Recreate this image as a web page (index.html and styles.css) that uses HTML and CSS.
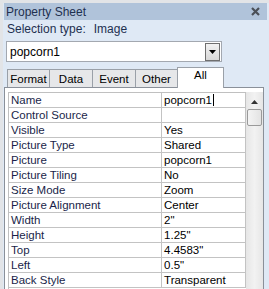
FILE: index.html
```html
<!DOCTYPE html>
<html>
<head>
<meta charset="utf-8">
<link rel="stylesheet" href="styles.css">
</head>
<body>
<div class="sheet">
  <div class="titlebar">
    <span class="title">Property Sheet</span>
    <svg class="close" width="9" height="9" viewBox="0 0 9 9"><path d="M1 1L8 8M8 1L1 8" stroke="#4a4f57" stroke-width="2.2"/></svg>
  </div>
  <div class="seltype"><span>Selection type:</span><span class="seltype-val">Image</span></div>
  <div class="combo">
    <span class="combo-text">popcorn1</span>
    <span class="combo-btn"><svg width="7" height="4" viewBox="0 0 7 4"><path d="M0 0H7L3.5 4Z" fill="#000"/></svg></span>
  </div>
  <div class="tabs">
    <div class="tab t-format">Format</div>
    <div class="tab t-data">Data</div>
    <div class="tab t-event">Event</div>
    <div class="tab t-other">Other</div>
    <div class="tab active">All</div>
  </div>
  <div class="page">
    <div class="grid">
      <div class="row"><div class="k">Name</div><div class="v edit">popcorn1<span class="caret"></span></div></div>
      <div class="row"><div class="k">Control Source</div><div class="v"></div></div>
      <div class="row"><div class="k">Visible</div><div class="v">Yes</div></div>
      <div class="row"><div class="k">Picture Type</div><div class="v">Shared</div></div>
      <div class="row"><div class="k">Picture</div><div class="v">popcorn1</div></div>
      <div class="row"><div class="k">Picture Tiling</div><div class="v">No</div></div>
      <div class="row"><div class="k">Size Mode</div><div class="v">Zoom</div></div>
      <div class="row"><div class="k">Picture Alignment</div><div class="v">Center</div></div>
      <div class="row"><div class="k">Width</div><div class="v">2"</div></div>
      <div class="row"><div class="k">Height</div><div class="v">1.25"</div></div>
      <div class="row"><div class="k">Top</div><div class="v">4.4583"</div></div>
      <div class="row"><div class="k">Left</div><div class="v">0.5"</div></div>
      <div class="row"><div class="k">Back Style</div><div class="v">Transparent</div></div>
    </div>
    <div class="scroll">
      <svg class="arrow" width="7" height="4" viewBox="0 0 7 4"><path d="M0 4H7L3.5 0Z" fill="#333"/></svg>
      <div class="thumb"></div>
    </div>
  </div>
</div>
</body>
</html>
```
FILE: styles.css
```css
html, body {
  margin: 0;
  padding: 0;
}
body {
  width: 269px;
  height: 289px;
  overflow: hidden;
  background: #e2e4e7;
  font-family: "Liberation Sans", Arial, sans-serif;
  font-size: 11.5px;
  color: #1b2a44;
}
.sheet {
  margin: 3px 0 0 3px;
  height: 286px;
  background: #dfe9f5;
  display: flex;
  flex-direction: column;
}
.titlebar {
  height: 17px;
  margin-left: 1px;
  margin-right: 2px;
  background: #b0c3da;
  display: flex;
  align-items: center;
  justify-content: space-between;
  padding: 0 7px 0 2px;
  font-size: 12px;
  color: #1e3050;
}
.close {
  display: block;
}
.seltype {
  height: 18px;
  display: flex;
  align-items: center;
  padding-left: 4px;
  font-size: 12px;
  color: #1e3050;
}
.seltype-val {
  margin-left: 8px;
}
.combo {
  margin: 3px 0 0 3px;
  width: 211px;
  height: 19px;
  border: 1px solid #a3a8b0;
  background: #fff;
  display: flex;
  align-items: center;
  justify-content: space-between;
  padding-left: 3px;
  color: #000;
  font-size: 12px;
}
.combo-btn {
  width: 13px;
  height: 16px;
  margin-right: 1px;
  border: 1px solid #6f6f6f;
  background: linear-gradient(#f2f2f2, #d8d8d8);
  display: flex;
  align-items: center;
  justify-content: center;
}
.tabs {
  margin: 4px 0 0 4px;
  height: 21px;
  display: flex;
  align-items: flex-end;
}
.tab {
  height: 17px;
  border: 1px solid #9aa0a8;
  border-bottom: none;
  border-left: none;
  background: #e6e7e9;
  color: #000;
  display: flex;
  align-items: center;
  justify-content: center;
}
.t-format {
  border-left: 1px solid #9aa0a8;
  width: 41px;
}
.t-data { width: 42px; }
.t-event { width: 42px; }
.t-other { width: 41px; }
.tab.active {
  height: 20px;
  width: 45px;
  margin-left: -1px;
  border-left: 1px solid #9aa0a8;
  background: #fff;
  align-items: flex-start;
  line-height: 15px;
  position: relative;
  top: 1px;
  z-index: 1;
}
.page {
  margin-left: 1px;
  width: 255px;
  flex: 1;
  border: 1px solid #8a9099;
  border-bottom: none;
  background: #fff;
  display: flex;
  padding: 4px 0 0 3px;
}
.grid {
  width: 237px;
  border-left: 1px solid #c0c0c0;
  border-top: 1px solid #c0c0c0;
}
.row {
  display: flex;
  height: 15px;
  border-bottom: 1px solid #c3c3c3;
  box-sizing: border-box;
}
.k {
  width: 152px;
  padding-left: 2px;
  border-right: 1px solid #c3c3c3;
  line-height: 14px;
  color: #1a1f4a;
}
.v {
  width: 82px;
  padding-left: 2px;
  border-right: 1px solid #c3c3c3;
  line-height: 14px;
  color: #000;
}
.edit {
  display: flex;
  align-items: center;
}
.caret {
  width: 1px;
  height: 12px;
  background: #000;
  margin-left: 1px;
}
.scroll {
  width: 18px;
  background: linear-gradient(90deg, #e6e6e6, #f2f2f2 50%, #e6e6e6);
  display: flex;
  flex-direction: column;
  align-items: center;
}
.arrow {
  margin-top: 8px;
}
.thumb {
  margin-top: 5px;
  width: 13px;
  height: 15px;
  border: 1px solid #9a9a9a;
  border-radius: 2px;
  background: linear-gradient(90deg, #f4f4f4, #e3e3e3);
}
```
